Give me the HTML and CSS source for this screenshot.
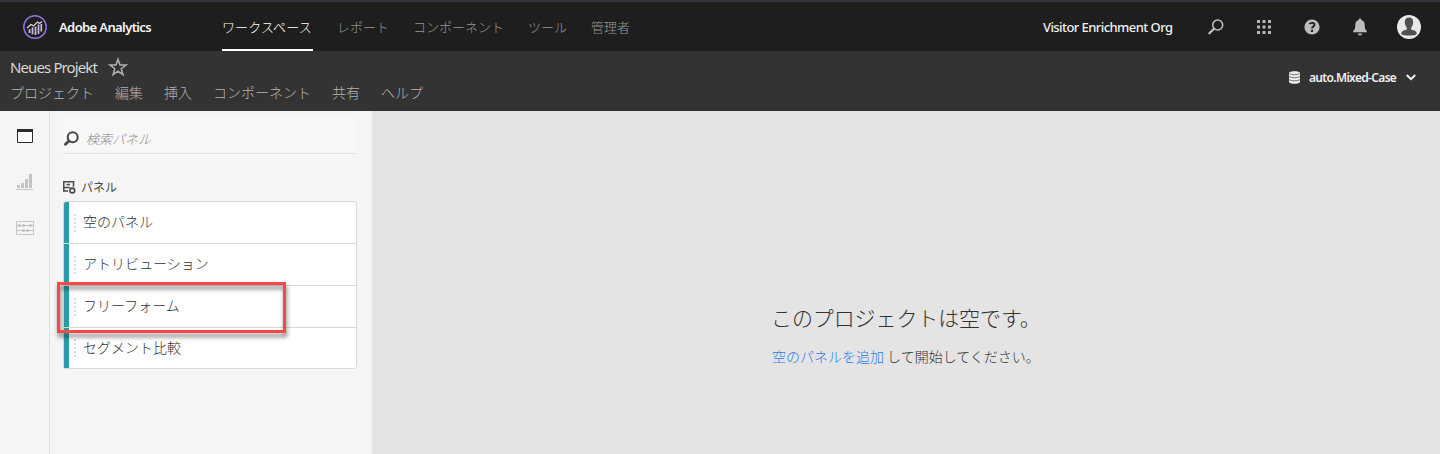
FILE: index.html
```
<!DOCTYPE html>
<html lang="ja">
<head>
<meta charset="utf-8">
<title>Adobe Analytics</title>
<link rel="stylesheet" href="styles.css">
</head>
<body>
<header class="topbar">
  <svg class="logo" viewBox="0 0 24 24" width="24" height="24" fill="none">
    <circle cx="12" cy="12" r="11.2" stroke="#9373e3" stroke-width="1.5"/>
    <path d="M4 13 8 9.500l2.500 1.300 4-3.800 2 1.500 2.500-2" stroke="#e4e0ee" stroke-width="1.1"/>
    <path d="M6.500 14v4M9.500 12.300v7M12.500 11.500v8.500M15.500 9.500v9.500M18.300 9v7.500" stroke="#c9c0de" stroke-width="1.700"/>
  </svg>
  <span class="brand">Adobe Analytics</span>
  <nav class="nav">
    <a class="nav-item active">ワークスペース</a>
    <a class="nav-item">レポート</a>
    <a class="nav-item">コンポーネント</a>
    <a class="nav-item">ツール</a>
    <a class="nav-item">管理者</a>
  </nav>
  <span class="org">Visitor Enrichment Org</span>
  <div class="tools">
    <svg width="16" height="16" viewBox="0 0 16 16" fill="none" stroke="#c0c0c0"><circle cx="9.700" cy="6" r="5" stroke-width="1.500"/><path d="M6 9.700 1.400 14.300" stroke-width="2.300" stroke-linecap="round"/></svg>
    <svg width="14" height="14" viewBox="0 0 14 14" fill="#b8b8b8"><path d="M0 0h3v3H0zM5.500 0h3v3h-3zM11 0h3v3h-3zM0 5.500h3v3H0zM5.500 5.500h3v3h-3zM11 5.500h3v3h-3zM0 11h3v3H0zM5.500 11h3v3h-3zM11 11h3v3h-3z"/></svg>
    <svg width="16" height="16" viewBox="0 0 16 16"><circle cx="8" cy="8" r="7.600" fill="#bcbcbc"/><path d="M5.500 5c1-1.500 5-1.700 5 .8C10.500 7.500 8 7.600 8 9.600" fill="none" stroke="#1e1e1e" stroke-width="1.900"/><rect x="6.900" y="10.800" width="2.200" height="2.200" rx=".6" fill="#1e1e1e"/></svg>
    <svg width="16" height="18" viewBox="0 0 16 18" fill="#bcbcbc"><path d="M8 .5c.9 0 1.400.6 1.400 1.600 2.300.7 3.300 2.600 3.300 5 0 3.600.7 4.700 2.200 6.200v1H1.100v-1c1.500-1.500 2.200-2.600 2.200-6.200 0-2.400 1-4.300 3.300-5C6.600 1.100 7.100.5 8 .5zM6 15.500h4c0 1.200-.8 2-2 2s-2-.8-2-2z"/></svg>
    <svg class="avatar" width="24" height="24" viewBox="0 0 24 24"><circle cx="12" cy="12" r="12" fill="#e8e8e8"/><path d="M12 2.500c2.900 0 4.200 2 4.200 4.700 0 2.200-.8 4-2 5.200v2.400c3.500.5 5.600 1.700 5.600 4.100-1.500 2.200-14 2.200-15.600 0 0-2.400 2.100-3.600 5.600-4.100v-2.400c-1.200-1.200-2-3-2-5.200 0-2.700 1.300-4.700 4.200-4.700z" fill="#505050"/></svg>
  </div>
</header>
<section class="project">
  <div class="project-main">
    <div class="title-row">
      <h1 class="title">Neues Projekt</h1>
      <svg width="20" height="20" viewBox="0 0 20 20" fill="none" stroke="#b0b0b0" stroke-width="1.500"><path d="m10 2.200 2 5.700 6 .1-4.800 3.700 1.800 6-5-3.500-5 3.500 1.800-6L2 8l6-.1z"/></svg>
    </div>
    <nav class="menu">
      <a>プロジェクト</a><a>編集</a><a>挿入</a><a>コンポーネント</a><a>共有</a><a>ヘルプ</a>
    </nav>
  </div>
  <div class="suite">
    <svg width="11" height="13" viewBox="0 0 11 13"><path d="M0 2c0-2.400 11-2.400 11 0v9c0 2.400-11 2.400-11 0z" fill="#ececec"/><path d="M.6 2.700c2 1.300 7.800 1.300 9.800 0M0 5.600c2 1.500 9 1.500 11 0M0 8.700c2 1.500 9 1.500 11 0" fill="none" stroke="#444" stroke-width=".7"/></svg>
    <span class="suite-name">auto.Mixed-Case</span>
    <svg width="10" height="7" viewBox="0 0 10 7" fill="none" stroke="#f0f0f0" stroke-width="2"><path d="m.8 1 4.200 4.200L9.200 1"/></svg>
  </div>
</section>
<main class="workspace">
  <aside class="rail">
    <svg width="18" height="14" viewBox="0 0 18 14"><path d="M1.500.5h15v13h-15z" fill="#fbfbfb" stroke="#2c2c2c"/><path d="M1 0h16v3H1z" fill="#2c2c2c"/></svg>
    <svg width="18" height="16" viewBox="0 0 18 16" fill="#c4c4c4"><path d="M0 15h17v1H0zM1 11h3v3H1zM5 9h3v5H5zM9 5h3v9H9zM13 0h3v14h-3z"/></svg>
    <svg width="18" height="14" viewBox="0 0 18 14" fill="#c4c4c4"><path d="M.5.500h17v13H.5zM0 4.500h18M0 9.500h18" fill="none" stroke="#c4c4c4"/><circle cx="3.500" cy="4.500" r="1.600"/><circle cx="7.500" cy="4.500" r="1.600"/><circle cx="14.500" cy="4.500" r="1.600"/><circle cx="7.500" cy="9.500" r="1.600"/><circle cx="11.500" cy="9.500" r="1.600"/></svg>
  </aside>
  <aside class="panel">
    <div class="search">
      <svg width="15" height="15" viewBox="0 0 15 15" fill="none" stroke="#444"><circle cx="8.700" cy="6.200" r="5" stroke-width="2"/><path d="M5 10 1.500 13.200" stroke-width="2.800" stroke-linecap="round"/></svg>
      <span class="placeholder">検索パネル</span>
    </div>
    <h2 class="section">
      <svg width="13" height="13" viewBox="0 0 13 13" fill="none" stroke="#484848"><path d="M.8 10.500V.8h9.700v5M.8 6.500h6M3.500 3.600H7M0 10h5" stroke-width="1.500"/><circle cx="9.300" cy="9.500" r="2.400" stroke-width="1.600"/></svg>
      <span>パネル</span>
    </h2>
    <div class="list">
      <div class="item"><i class="grip"></i><span>空のパネル</span></div>
      <div class="item"><i class="grip"></i><span>アトリビューション</span></div>
      <div class="item"><i class="grip"></i><span>フリーフォーム</span></div>
      <div class="item"><i class="grip"></i><span>セグメント比較</span></div>
      <div class="highlight"></div>
    </div>
  </aside>
  <section class="canvas">
    <div class="empty">
      <h2 class="empty-title">このプロジェクトは空です。</h2>
      <p class="empty-text"><a class="link">空のパネルを追加</a> して開始してください。</p>
    </div>
  </section>
</main>
</body>
</html>
```
FILE: styles.css
```
* { box-sizing: border-box; }
body {
  margin: 0;
  height: 454px;
  display: flex;
  flex-direction: column;
  overflow: hidden;
  font-family: "Noto Sans CJK JP", sans-serif;
  font-weight: 300;
  font-size: 14px;
}
svg { display: block; flex: none; }
h1, h2, p { margin: 0; font-weight: inherit; }

.topbar {
  height: 51px;
  display: flex;
  align-items: center;
  padding: 1px 19px 0 23px;
  background: #1e1e1e;
  border-top: 2px solid #32363a;
}
.brand, .org, .title, .suite-name { font-family: "Noto Sans", sans-serif; white-space: nowrap; }
.brand { margin-left: 12px; width: 163px; font-size: 13px; font-weight: 600; letter-spacing: -0.62px; color: #f4f4f4; }
.nav { display: flex; gap: 24px; align-self: stretch; font-size: 13px; flex: 1; }
.nav-item { height: 48px; line-height: 47px; color: #969696; white-space: nowrap; }
.nav-item.active { width: 91px; letter-spacing: 0.1px; color: #fff; border-bottom: 2px solid #fff; }
.org { width: 132px; font-size: 13px; font-weight: 500; letter-spacing: -0.57px; color: #f0f0f0; }
.tools { display: flex; align-items: center; gap: 32px; margin-left: 33px; }
.tools svg:nth-child(2) { margin: 0 1px; }
.tools .avatar { margin-left: -3px; }

.project {
  height: 60px;
  display: flex;
  justify-content: space-between;
  padding: 6px 24px 0 10px;
  background: #333;
}
.title-row { display: flex; align-items: center; height: 20px; gap: 10px; }
.title { width: 88px; font-size: 15px; font-weight: 400; letter-spacing: -0.88px; color: #d8d8d8; }
.menu { display: flex; gap: 21px; margin-top: 5px; line-height: 20px; color: #b4b4b4; }
.suite { display: flex; align-items: center; height: 40px; color: #f0f0f0; }
.suite-name { width: 89px; margin: 0 8px 0 9px; font-size: 12px; font-weight: 600; letter-spacing: -0.67px; }

.workspace { flex: 1; display: flex; min-height: 0; }
.rail {
  width: 50px;
  padding: 18px 0 0 16px;
  display: flex;
  flex-direction: column;
  gap: 31px;
  background: #f5f5f5;
  border-right: 1px solid #e0e0e0;
}
.panel { width: 322px; padding: 5px 15px 0 13px; background: #f5f5f5; }
.search {
  height: 38px;
  display: flex;
  align-items: center;
  gap: 7px;
  padding: 8px 0 0 1px;
  border-bottom: 1px solid #e1e1e1;
  background: #f7f7f7;
}
.placeholder { font-size: 13px; line-height: 20px; font-style: italic; color: #8c8c8c; }
.section { display: flex; align-items: center; gap: 5px; height: 20px; margin-top: 23px; font-size: 12px; font-weight: 400; color: #4b4b4b; }
.section span { padding-bottom: 2px; }
.list {
  position: relative;
  margin-top: 4px;
  height: 168px;
  border: 1px solid #d6d9d9;
  border-radius: 3px;
  background: #fff;
}
.item {
  height: 42px;
  display: flex;
  align-items: center;
  padding-left: 10px;
  background: linear-gradient(#2b9ca5, #2b9ca5) left / 5px 100% no-repeat;
  border-bottom: 1px solid #d6d9d9;
  background-clip: padding-box;
  color: #323232;
}
.item span { padding-bottom: 3px; }
.item:nth-child(4) { height: 40px; border-bottom: 0; }
.item:first-child { border-top-left-radius: 2px; }
.grip { width: 2px; height: 18px; margin-right: 7px; background: repeating-linear-gradient(#dcdcdc 0 2px, transparent 2px 4px); }
.highlight {
  position: absolute;
  left: -7px;
  top: 80px;
  width: 229px;
  height: 51px;
  border: 3px solid #fa4646;
  filter: drop-shadow(1px 4px 2px rgba(0, 0, 0, .5));
}
.canvas { flex: 1; background: #e4e4e4; padding: 189px 0 0 400px; color: #323232; }
.empty-title { font-size: 21px; line-height: 34px; letter-spacing: -0.1px; margin-left: -1px; }
.empty-text { margin-top: 12px; line-height: 20px; }
.link { color: #2680eb; }
```
